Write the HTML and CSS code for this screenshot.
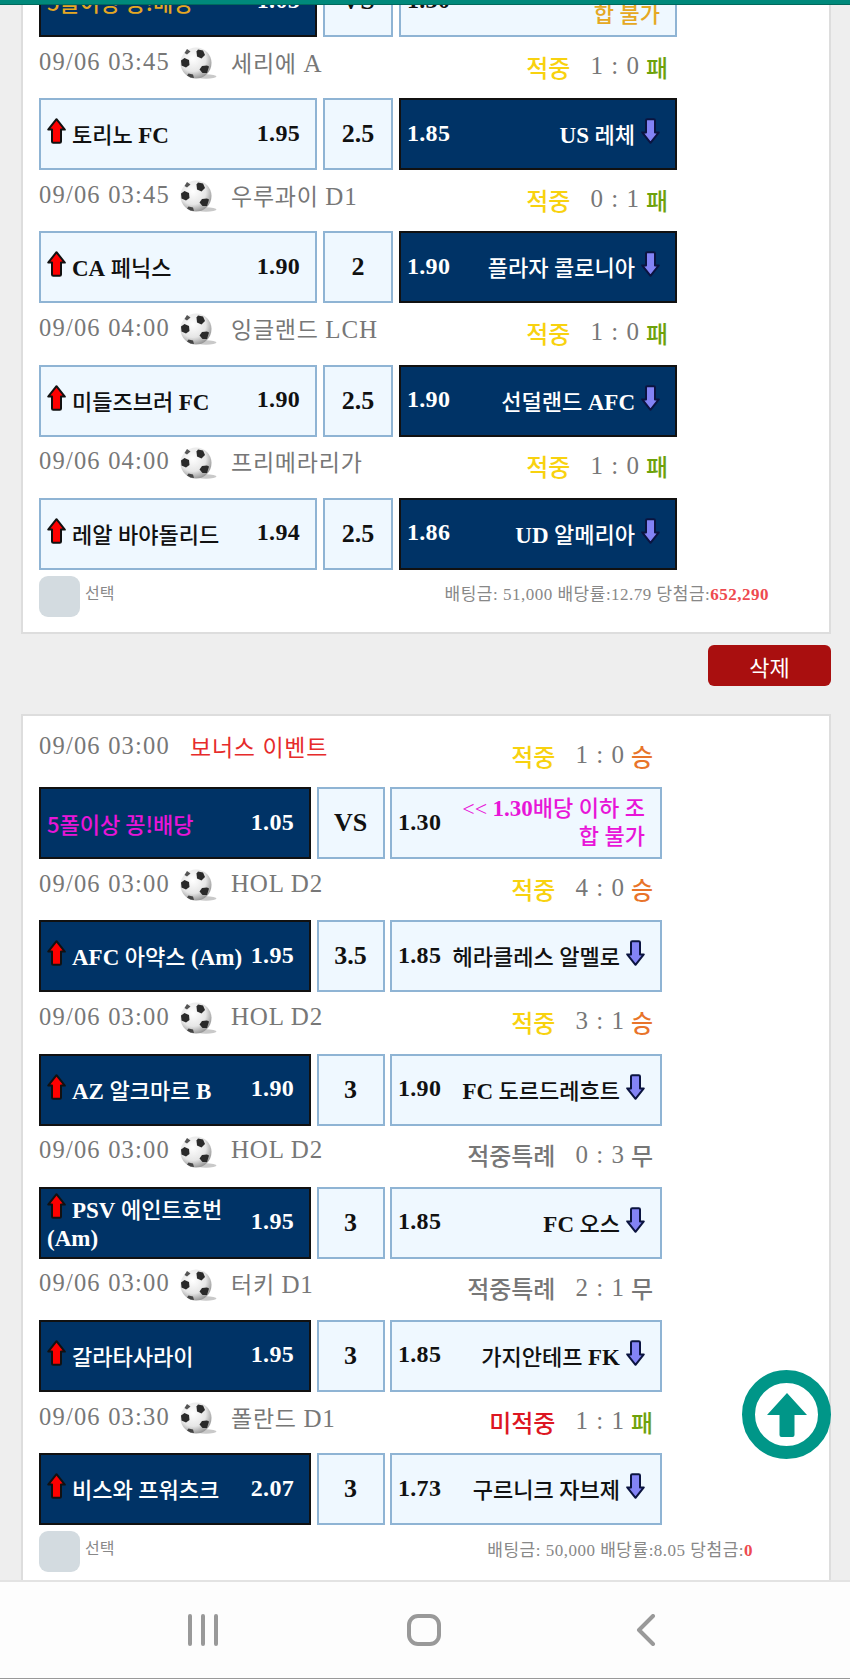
FILE: index.html
```html
<!DOCTYPE html>
<html lang="en">
<head>
  <meta charset="UTF-8">
  <meta name="viewport" content="width=device-width, initial-scale=1.0">
  <title>배팅 내역</title>
  <link rel="stylesheet" href="styles.css">
</head>
<body>

  <svg class="sprites" width="0" height="0">
    <defs>
      <radialGradient id="ballFill" cx="40%" cy="35%" r="70%">
        <stop offset="0%" stop-color="#fff"/>
        <stop offset="60%" stop-color="#e6e6e6"/>
        <stop offset="100%" stop-color="#8d8d8d"/>
      </radialGradient>
      <symbol id="ball" viewBox="0 0 38 33">
        <ellipse cx="27" cy="29.5" rx="10.5" ry="2.2" fill="#c9c9c9"/>
        <circle cx="17" cy="16" r="15.5" fill="url(#ballFill)"/>
        <path d="M19 2.5l5 1 2 4.5-3.5 3.5-4.5-2-.5-5z" fill="#2a2a2a"/>
        <path d="M5.5 11l4.5 2 .5 5-3.5 2.5-4.5-2-.5-5z" fill="#2a2a2a"/>
        <path d="M23 19l5-.5 2 1-2 6.5-4.5 0-3-3.5z" fill="#2a2a2a"/>
        <path d="M8 2 11.5 4.5 8 7.5 5.5 6z" fill="#555"/>
        <path d="M9.5 26.5l4.5 1 1 3.5-3.5-.5-3.5-2z" fill="#444"/>
      </symbol>
      <symbol id="up" viewBox="0 0 19 26">
        <path d="M9.5 1.2 17.8 11.6H14V23.5a1.3 1.3 0 0 1-1.3 1.3H6.3A1.3 1.3 0 0 1 5 23.5V11.6H1.2z" fill="#f00" stroke="#111" stroke-width="2" stroke-linejoin="round"/>
      </symbol>
      <symbol id="down" viewBox="0 0 19 26">
        <path d="M6.3 1.2H12.7A1.3 1.3 0 0 1 14 2.5V14.4H17.8L9.5 24.8 1.2 14.4H5V2.5A1.3 1.3 0 0 1 6.3 1.2z" fill="#8383f5" stroke="#0b1440" stroke-width="2" stroke-linejoin="round"/>
      </symbol>
    </defs>
  </svg>

  <div class="topbar"></div>

  <div class="scroller">

    <!-- 첫번째 슬립 -->
    <section class="slip slip-wide">
      <div class="row">
        <div class="box dark">
          <div class="team gold sans">5폴이상 꽁!배당</div>
          <div class="odds">1.05</div>
        </div>
        <div class="box mid">VS</div>
        <div class="box light">
          <div class="odds left">1.30</div>
          <div class="team right gold"><span class="thin">&lt;&lt;</span> <b>1.30</b>배당 이하 조<br>합 불가</div>
        </div>
      </div>

      <div class="meta">
        <span class="date">09/06 03:45</span>
        <svg class="ball"><use href="#ball"/></svg>
        <span class="league">세리에 <span class="lat">A</span></span>
        <span class="result"><span class="hit">적중</span><span class="score">1 : 0</span><span class="lose">패</span></span>
      </div>
      <div class="row">
        <div class="box light">
          <div class="team"><svg class="arrow"><use href="#up"/></svg>토리노 <b>FC</b></div>
          <div class="odds">1.95</div>
        </div>
        <div class="box mid">2.5</div>
        <div class="box dark">
          <div class="odds left">1.85</div>
          <div class="team right"><b>US</b> 레체<svg class="arrow arrow-down"><use href="#down"/></svg></div>
        </div>
      </div>

      <div class="meta">
        <span class="date">09/06 03:45</span>
        <svg class="ball"><use href="#ball"/></svg>
        <span class="league">우루과이 <span class="lat">D1</span></span>
        <span class="result"><span class="hit">적중</span><span class="score">0 : 1</span><span class="lose">패</span></span>
      </div>
      <div class="row">
        <div class="box light">
          <div class="team"><svg class="arrow"><use href="#up"/></svg><b>CA</b> 페닉스</div>
          <div class="odds">1.90</div>
        </div>
        <div class="box mid">2</div>
        <div class="box dark">
          <div class="odds left">1.90</div>
          <div class="team right">플라자 콜로니아<svg class="arrow arrow-down"><use href="#down"/></svg></div>
        </div>
      </div>

      <div class="meta">
        <span class="date">09/06 04:00</span>
        <svg class="ball"><use href="#ball"/></svg>
        <span class="league">잉글랜드 <span class="lat">LCH</span></span>
        <span class="result"><span class="hit">적중</span><span class="score">1 : 0</span><span class="lose">패</span></span>
      </div>
      <div class="row">
        <div class="box light">
          <div class="team"><svg class="arrow"><use href="#up"/></svg>미들즈브러 <b>FC</b></div>
          <div class="odds">1.90</div>
        </div>
        <div class="box mid">2.5</div>
        <div class="box dark">
          <div class="odds left">1.90</div>
          <div class="team right">선덜랜드 <b>AFC</b><svg class="arrow arrow-down"><use href="#down"/></svg></div>
        </div>
      </div>

      <div class="meta">
        <span class="date">09/06 04:00</span>
        <svg class="ball"><use href="#ball"/></svg>
        <span class="league">프리메라리가</span>
        <span class="result"><span class="hit">적중</span><span class="score">1 : 0</span><span class="lose">패</span></span>
      </div>
      <div class="row">
        <div class="box light">
          <div class="team"><svg class="arrow"><use href="#up"/></svg>레알 바야돌리드</div>
          <div class="odds">1.94</div>
        </div>
        <div class="box mid">2.5</div>
        <div class="box dark">
          <div class="odds left">1.86</div>
          <div class="team right"><b>UD</b> 알메리아<svg class="arrow arrow-down"><use href="#down"/></svg></div>
        </div>
      </div>

      <div class="slip-foot">
        <span class="check"></span>
        <span class="check-label">선택</span>
        <span class="summary">배팅금: 51,000 배당률:12.79 당첨금:<b>652,290</b></span>
      </div>
    </section>

    <div class="actions">
      <button class="btn-delete" type="button">삭제</button>
    </div>

    <!-- 두번째 슬립 -->
    <section class="slip slip-narrow">
      <div class="meta meta-plain">
        <span class="date">09/06 03:00</span>
        <span class="league bonus">보너스 이벤트</span>
        <span class="result"><span class="hit">적중</span><span class="score">1 : 0</span><span class="win">승</span></span>
      </div>
      <div class="row">
        <div class="box dark">
          <div class="team pink sans">5폴이상 꽁!배당</div>
          <div class="odds">1.05</div>
        </div>
        <div class="box mid">VS</div>
        <div class="box light">
          <div class="odds left">1.30</div>
          <div class="team right pink"><span class="thin">&lt;&lt;</span> <b>1.30</b>배당 이하 조<br>합 불가</div>
        </div>
      </div>

      <div class="meta">
        <span class="date">09/06 03:00</span>
        <svg class="ball"><use href="#ball"/></svg>
        <span class="league"><span class="lat">HOL D2</span></span>
        <span class="result"><span class="hit">적중</span><span class="score">4 : 0</span><span class="win">승</span></span>
      </div>
      <div class="row">
        <div class="box dark">
          <div class="team"><svg class="arrow"><use href="#up"/></svg><b>AFC</b> 아약스 <b>(Am)</b></div>
          <div class="odds">1.95</div>
        </div>
        <div class="box mid">3.5</div>
        <div class="box light">
          <div class="odds left">1.85</div>
          <div class="team right">헤라클레스 알멜로<svg class="arrow arrow-down"><use href="#down"/></svg></div>
        </div>
      </div>

      <div class="meta">
        <span class="date">09/06 03:00</span>
        <svg class="ball"><use href="#ball"/></svg>
        <span class="league"><span class="lat">HOL D2</span></span>
        <span class="result"><span class="hit">적중</span><span class="score">3 : 1</span><span class="win">승</span></span>
      </div>
      <div class="row">
        <div class="box dark">
          <div class="team"><svg class="arrow"><use href="#up"/></svg><b>AZ</b> 알크마르 <b>B</b></div>
          <div class="odds">1.90</div>
        </div>
        <div class="box mid">3</div>
        <div class="box light">
          <div class="odds left">1.90</div>
          <div class="team right"><b>FC</b> 도르드레흐트<svg class="arrow arrow-down"><use href="#down"/></svg></div>
        </div>
      </div>

      <div class="meta">
        <span class="date">09/06 03:00</span>
        <svg class="ball"><use href="#ball"/></svg>
        <span class="league"><span class="lat">HOL D2</span></span>
        <span class="result"><span class="special">적중특례</span><span class="score">0 : 3</span><span class="draw">무</span></span>
      </div>
      <div class="row">
        <div class="box dark">
          <div class="team"><svg class="arrow"><use href="#up"/></svg><b>PSV</b> 에인트호번 <b>(Am)</b></div>
          <div class="odds">1.95</div>
        </div>
        <div class="box mid">3</div>
        <div class="box light">
          <div class="odds left">1.85</div>
          <div class="team right"><b>FC</b> 오스<svg class="arrow arrow-down"><use href="#down"/></svg></div>
        </div>
      </div>

      <div class="meta">
        <span class="date">09/06 03:00</span>
        <svg class="ball"><use href="#ball"/></svg>
        <span class="league">터키 <span class="lat">D1</span></span>
        <span class="result"><span class="special">적중특례</span><span class="score">2 : 1</span><span class="draw">무</span></span>
      </div>
      <div class="row">
        <div class="box dark">
          <div class="team"><svg class="arrow"><use href="#up"/></svg>갈라타사라이</div>
          <div class="odds">1.95</div>
        </div>
        <div class="box mid">3</div>
        <div class="box light">
          <div class="odds left">1.85</div>
          <div class="team right">가지안테프 <b>FK</b><svg class="arrow arrow-down"><use href="#down"/></svg></div>
        </div>
      </div>

      <div class="meta">
        <span class="date">09/06 03:30</span>
        <svg class="ball"><use href="#ball"/></svg>
        <span class="league">폴란드 <span class="lat">D1</span></span>
        <span class="result"><span class="miss">미적중</span><span class="score">1 : 1</span><span class="lose">패</span></span>
      </div>
      <div class="row">
        <div class="box dark">
          <div class="team"><svg class="arrow"><use href="#up"/></svg>비스와 프워츠크</div>
          <div class="odds">2.07</div>
        </div>
        <div class="box mid">3</div>
        <div class="box light">
          <div class="odds left">1.73</div>
          <div class="team right">구르니크 자브제<svg class="arrow arrow-down"><use href="#down"/></svg></div>
        </div>
      </div>

      <div class="slip-foot">
        <span class="check"></span>
        <span class="check-label">선택</span>
        <span class="summary">배팅금: 50,000 배당률:8.05 당첨금:<b>0</b></span>
      </div>
    </section>
  </div>

  <a class="to-top" href="#">
    <svg viewBox="0 0 40 44" width="40" height="44"><path d="M20 0 40 22H27.5V42a2 2 0 0 1-2 2h-11a2 2 0 0 1-2-2V22H0z" fill="#009688"/></svg>
  </a>

  <nav class="navbar">
    <svg class="nav-icon" width="32" height="32" viewBox="0 0 32 32"><path d="M3 2v28M16 2v28M29 2v28"/></svg>
    <svg class="nav-icon nav-home" width="36" height="32" viewBox="0 0 36 32"><rect x="3" y="2" width="30" height="28" rx="9"/></svg>
    <svg class="nav-icon" width="20" height="32" viewBox="0 0 20 32"><path d="M17 2 3 16 17 30"/></svg>
  </nav>

</body>
</html>
```

FILE: styles.css
```css
* {
  box-sizing: border-box;
}

html, body {
  margin: 0;
  padding: 0;
}

body {
  position: relative;
  width: 850px;
  height: 1679px;
  overflow: hidden;
  background-color: #eee;
  font-family: "Liberation Serif", "Noto Sans CJK KR", serif;
}

.sprites {
  position: absolute;
}

.topbar {
  position: absolute;
  top: 0;
  left: 0;
  right: 0;
  height: 5px;
  background-color: #00897b;
  border-bottom: 1px solid #00695c;
  z-index: 5;
}

.scroller {
  height: 1580px;
  overflow: hidden;
}

/* Slip */
.slip {
  margin: 0 19px 0 21px;
  padding: 10px 15px 0 16px;
  background-color: #fff;
  border: 2px solid #ddd;
}

.slip-wide {
  margin-top: -47px;
  height: 681px;
}

.slip-narrow {
  height: 880px;
}

.slip-wide .row {
  grid-template-columns: 278px 70px 278px;
  gap: 6px;
}

.slip-narrow .row {
  grid-template-columns: 272px 68px 272px;
  gap: 5.5px;
}

.row {
  display: grid;
  height: 72px;
}

.meta {
  display: flex;
  align-items: center;
  height: 61.2px;
  padding-bottom: 12px;
  color: #777;
}

.slip-wide .meta {
  padding-right: 146px;
}

.slip-narrow .meta {
  padding-right: 161px;
}

.meta-plain .date,
.meta-plain .league {
  margin-bottom: 9px;
}

.date {
  font-size: 24.5px;
  letter-spacing: 1.2px;
}

.ball {
  width: 38px;
  height: 33px;
  margin: 4px 14px 0 9px;
}

.league {
  font-size: 23px;
  letter-spacing: .8px;
}

.league .lat {
  font-size: 25px;
}

.league.bonus {
  margin-left: 20px;
  color: #e62b2b;
}

.result {
  display: flex;
  align-items: center;
  margin-left: auto;
  padding-top: 9px;
  font-size: 24px;
  font-weight: 500;
}

.hit {
  color: #f8d20f;
}

.miss {
  color: #dd1622;
}

.special {
  color: #777;
}

.score {
  margin: 0 6px 0 20px;
  font-size: 25px;
  letter-spacing: 1px;
}

.win {
  color: #e8742a;
}

.lose {
  color: #6ea20b;
}

.draw {
  color: #777;
}

/* Boxes */
.box {
  display: flex;
  align-items: center;
  padding: 0 15px 0 6px;
  border: 2px solid #8fb4d4;
  background-color: #eff8ff;
  color: #111;
}

.box.dark {
  border-color: #111;
  background-color: #003366;
  color: #fff;
}

.box.mid {
  justify-content: center;
  padding: 0;
  font-size: 26px;
  font-weight: bold;
}

.team {
  flex: 1;
  font-size: 22px;
  font-weight: 500;
  line-height: 28px;
}

.team b {
  font-size: 23px;
}

.team.right {
  text-align: right;
}

.sans {
  font-family: "Noto Sans CJK KR", sans-serif;
}

.gold {
  color: #e5a823;
}

.pink {
  color: #e815d8;
}

.thin {
  font-weight: normal;
}

.odds {
  font-size: 24px;
  font-weight: bold;
  letter-spacing: .3px;
  margin-top: -2px;
}

.odds.left {
  margin-right: 4px;
}

.arrow {
  width: 19px;
  height: 26px;
  margin-right: 6px;
  vertical-align: -1px;
}

.arrow-down {
  margin: 0 0 0 6px;
}

/* Slip footer */
.slip-foot {
  display: flex;
  align-items: center;
  margin-top: 6px;
  color: #888;
  font-size: 16px;
}

.check {
  width: 41px;
  height: 41px;
  border-radius: 9px;
  background-color: #d3dbe0;
}

.check-label {
  margin-left: 5px;
  margin-top: -9px;
}

.summary {
  margin-top: -7px;
  margin-left: auto;
  font-size: 17px;
  letter-spacing: .5px;
}

.slip-wide .summary {
  margin-right: 45px;
}

.slip-narrow .summary {
  margin-right: 61px;
}

.summary b {
  color: #ee4a50;
}

/* Delete */
.actions {
  display: flex;
  justify-content: flex-end;
  height: 80px;
  padding: 11px 19px 0 0;
}

.btn-delete {
  width: 123px;
  height: 41px;
  border: none;
  border-radius: 6px;
  background-color: #a90f0f;
  color: #fff;
  font-family: inherit;
  font-size: 22px;
}

/* Scroll to top */
.to-top {
  position: absolute;
  left: 742px;
  top: 1370px;
  display: flex;
  align-items: center;
  justify-content: center;
  width: 89px;
  height: 89px;
  border: 13px solid #009688;
  border-radius: 50%;
  background-color: #fff;
}

/* Android nav */
.navbar {
  display: flex;
  align-items: center;
  justify-content: space-between;
  height: 99px;
  padding: 0 194px 0 187px;
  background-color: #fdfdfd;
  border-top: 2px solid #e3e3e3;
  border-bottom: 1px solid #999;
}

.nav-icon {
  fill: none;
  stroke: #999;
  stroke-width: 4;
  stroke-linecap: round;
  stroke-linejoin: round;
}

.nav-home {
  margin-right: 8px;
}
```
